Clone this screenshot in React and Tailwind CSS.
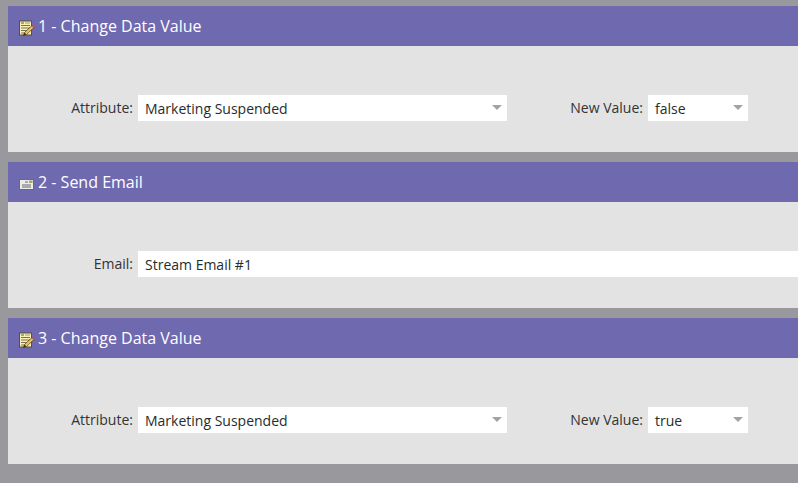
function NoteIcon() {
  return (
    <svg width="16" height="16" viewBox="0 0 16 16" className="shrink-0 mt-[4px]">
      <rect x="0.500" y="1" width="12" height="14" fill="#faf2b4" stroke="#55513a" strokeWidth="1" />
      <rect x="2" y="2.500" width="3" height="1" fill="#5a5540" />
      <rect x="6" y="2.500" width="5" height="1" fill="#9c9672" />
      <path d="M2 5.500h9M2 8h9M2 10.500h6M2 13h3" stroke="#77714f" strokeWidth="1" />
      <path d="M4.500 15.500l1-3 7.500-7 2 2-7.500 7z" fill="#f0c060" stroke="#4a3018" strokeWidth="0.700" />
      <path d="M12.500 6l2 2 1.200-1.300-1.900-1.900z" fill="#c8504a" />
      <path d="M4.500 15.500l1-3 1.800 1.800z" fill="#3a2a18" />
    </svg>
  );
}

function MailIcon() {
  return (
    <svg width="16" height="16" viewBox="0 0 16 16" className="shrink-0 mt-[4px]">
      <rect x="0.500" y="3.500" width="14" height="10" fill="#ecece6" stroke="#6a6a70" strokeWidth="1" />
      <rect x="10" y="4.500" width="3.500" height="2.500" fill="#a3ad62" />
      <path d="M6 6h3M3 9h9M3 11h9" stroke="#66666a" strokeWidth="1" />
    </svg>
  );
}

function Caret() {
  return <div className="w-0 h-0 border-l-[5px] border-r-[5px] border-t-[5px] border-l-transparent border-r-transparent border-t-[#a3a3a3]" />;
}

function Select({ value, className }) {
  return (
    <div className={"h-[26px] bg-white flex items-center justify-between pl-[7px] pr-[5px] text-[14px] text-[#1f2d2d] " + className}>
      <span>{value}</span>
      <div className="mb-[2px]"><Caret /></div>
    </div>
  );
}

function Label({ children, className }) {
  return <div className={"text-[14px] text-[#333] text-right pr-[5px] " + className}>{children}</div>;
}

function Panel({ icon, title, children }) {
  return (
    <section>
      <header className="h-10 bg-[#6f69af] flex items-center pl-[11px] gap-[3px] text-white text-[16px]">
        {icon}
        <span>{title}</span>
      </header>
      <div className="h-[106px] bg-[#e3e3e3] pt-[49px] flex items-start">{children}</div>
    </section>
  );
}

function DataRow({ value }) {
  return (
    <>
      <Label className="w-[130px] leading-[26px]">Attribute:</Label>
      <Select value="Marketing Suspended" className="w-[369px]" />
      <Label className="w-[141px] leading-[26px]">New Value:</Label>
      <Select value={value} className="w-[100px]" />
    </>
  );
}

export default function App() {
  return (
    <div className="w-[798px] h-[483px] overflow-hidden bg-[#99989c] pt-[6px] pl-2 flex flex-col gap-[10px] font-['Open_Sans',sans-serif]">
      <Panel icon={<NoteIcon />} title="1 - Change Data Value">
        <DataRow value="false" />
      </Panel>
      <Panel icon={<MailIcon />} title="2 - Send Email">
        <Label className="w-[130px] leading-[26px]">Email:</Label>
        <div className="flex-1 h-[26px] bg-white flex items-center pl-[7px] text-[14px] text-[#1f2d2d]">
          <span>Stream Email #1</span>
        </div>
      </Panel>
      <Panel icon={<NoteIcon />} title="3 - Change Data Value">
        <DataRow value="true" />
      </Panel>
    </div>
  );
}
